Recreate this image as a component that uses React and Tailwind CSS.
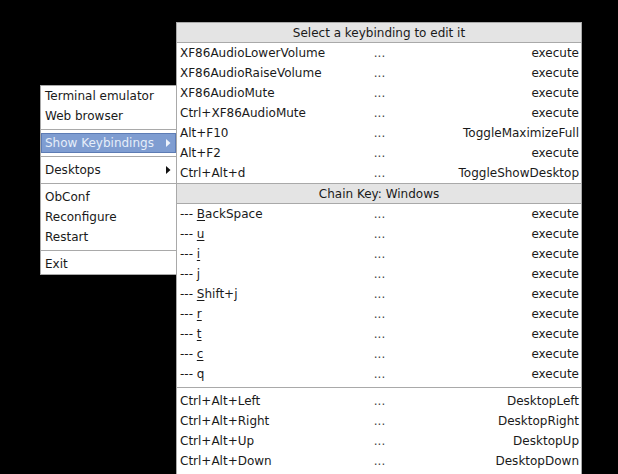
import React from "react";

const font = { fontFamily: '"DejaVu Sans", "Liberation Sans", sans-serif' };

function Arrow({ color }) {
  return (
    <svg width="5" height="8" viewBox="0 0 5 8" className="shrink-0">
      <path d="M0 0 L4.5 4 L0 8 Z" fill={color} />
    </svg>
  );
}

function LeftItem({ label, arrow, active }) {
  return (
    <div
      className={
        "h-5 flex items-center justify-between " +
        (active
          ? "bg-[#7f9dd1] border border-[#5d7cb5] text-[#e6eef9] pl-[3px] pr-[4px]"
          : "text-[#1a1a1a] pl-[4px] pr-[5px]")
      }
    >
      <span>{label}</span>
      {arrow && <Arrow color={active ? "#eef3fb" : "#111"} />}
    </div>
  );
}

function LeftSep() {
  return (
    <div className="h-[7px] flex items-center">
      <div className="w-full h-px bg-[#a9a9a9]" />
    </div>
  );
}

function Row({ k, a, u }) {
  let keyEl = k;
  if (u) {
    keyEl = (
      <>
        {u[0]}
        <span className="underline underline-offset-2">{u[1]}</span>
        {u[2]}
      </>
    );
  }
  return (
    <div className="h-5 grid grid-cols-[1fr_auto_1fr] items-center pl-[3px] pr-[2px] text-[#1a1a1a]">
      <span className="whitespace-nowrap">{keyEl}</span>
      <span className="text-[#444]">...</span>
      <span className="text-right whitespace-nowrap">{a}</span>
    </div>
  );
}

export default function App() {
  const top = [
    ["XF86AudioLowerVolume", "execute"],
    ["XF86AudioRaiseVolume", "execute"],
    ["XF86AudioMute", "execute"],
    ["Ctrl+XF86AudioMute", "execute"],
    ["Alt+F10", "ToggleMaximizeFull"],
    ["Alt+F2", "execute"],
    ["Ctrl+Alt+d", "ToggleShowDesktop"],
  ];
  const chain = [
    ["--- ", "B", "ackSpace"],
    ["--- ", "u", ""],
    ["--- ", "i", ""],
    ["--- j", "", ""],
    ["--- ", "S", "hift+j"],
    ["--- ", "r", ""],
    ["--- ", "t", ""],
    ["--- ", "c", ""],
    ["--- q", "", ""],
  ];
  const bottom = [
    ["Ctrl+Alt+Left", "DesktopLeft"],
    ["Ctrl+Alt+Right", "DesktopRight"],
    ["Ctrl+Alt+Up", "DesktopUp"],
    ["Ctrl+Alt+Down", "DesktopDown"],
  ];

  return (
    <div className="relative w-[618px] h-[474px] bg-black overflow-hidden text-[12px]" style={font}>
      {/* Root menu */}
      <div className="absolute left-[40px] top-[85px] w-[137px] bg-white border border-[#a9a9a9]">
        <LeftItem label="Terminal emulator" />
        <LeftItem label="Web browser" />
        <LeftSep />
        <LeftItem label="Show Keybindings" arrow active />
        <LeftSep />
        <LeftItem label="Desktops" arrow />
        <LeftSep />
        <LeftItem label="ObConf" />
        <LeftItem label="Reconfigure" />
        <LeftItem label="Restart" />
        <LeftSep />
        <LeftItem label="Exit" />
      </div>

      {/* Keybindings submenu */}
      <div className="absolute left-[176px] top-[22px] w-[406px] bg-white border border-[#a9a9a9]">
        <div className="h-5 bg-[#e4e4e4] border-b border-[#a9a9a9] flex items-center justify-center text-[#1a1a1a]">
          Select a keybinding to edit it
        </div>
        {top.map(([k, a]) => (
          <Row key={k} k={k} a={a} />
        ))}
        <div className="h-[21px] bg-[#e4e4e4] border-y border-[#a9a9a9] flex items-center justify-center text-[#1a1a1a]">
          Chain Key: Windows
        </div>
        {chain.map((u, i) =>
          u[1] ? <Row key={i} u={u} a="execute" /> : <Row key={i} k={u[0]} a="execute" />
        )}
        <div className="h-[7px] flex items-center">
          <div className="w-full h-px bg-[#a9a9a9]" />
        </div>
        {bottom.map(([k, a]) => (
          <Row key={k} k={k} a={a} />
        ))}
        <div className="h-5" />
      </div>
    </div>
  );
}
